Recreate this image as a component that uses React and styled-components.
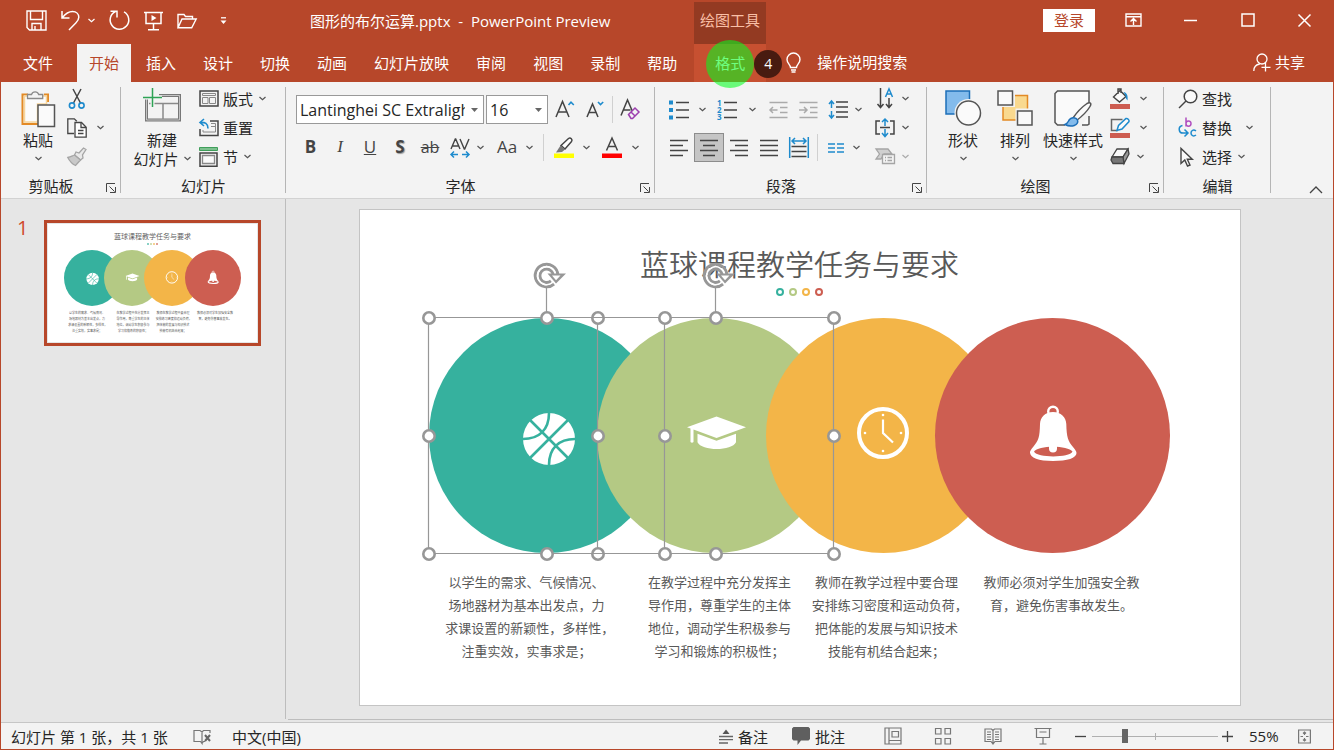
import React from 'react';
import styled, { createGlobalStyle } from 'styled-components';

const GlobalStyle = createGlobalStyle`
	* {
		box-sizing: border-box;
	}
	body {
		margin: 0;
		background: #e6e6e6;
		color: #262626;
		font-family: 'Open Sans', 'Noto Sans CJK SC', sans-serif;
		font-size: 15px;
	}
	button,
	select,
	input {
		font: inherit;
		color: inherit;
	}
	button {
		border: 0;
		padding: 0;
		background: none;
		white-space: nowrap;
	}
	svg {
		display: block;
		flex: none;
		overflow: visible;
	}
`;

/* ---------- window ---------- */
const Window = styled.div`
	display: flex;
	flex-direction: column;
	min-height: 100vh;
	border: 1px solid #b7472a;
	border-top: 0;
`;
const TitleBar = styled.header`
	display: flex;
	align-items: center;
	height: 44px;
	background: #b7472a;
	color: #fff;
`;
const QuickAccess = styled.div`
	display: flex;
	align-items: center;
	gap: 14px;
	width: 309px;
	padding: 0 0 3px 25px;
	button {
		display: flex;
		align-items: center;
		gap: 8px;
	}
`;
const DocTitle = styled.h1`
	width: 384px;
	margin: 0;
	padding-bottom: 3px;
	font-size: 15px;
	font-weight: 400;
	white-space: pre;
`;
const ToolContext = styled.div`
	align-self: flex-end;
	width: 72px;
	height: 42px;
	line-height: 36px;
	text-align: center;
	background: #933a22;
	color: #f9bfa6;
`;
const WindowButtons = styled.div`
	display: flex;
	align-items: center;
	margin-left: auto;
	padding-bottom: 4px;
`;
const SignIn = styled.button`
	width: 52px;
	height: 23px;
	margin-right: 10px;
	line-height: 22px;
	background: #fff;
	color: #b7472a;
`;
const WindowButton = styled.button`
	display: flex;
	justify-content: center;
	align-items: center;
	width: 57px;
	height: 40px;
`;

/* ---------- ribbon tabs ---------- */
const Tabs = styled.nav`
	display: flex;
	gap: 3px;
	height: 38px;
	padding: 0 28px 0 10px;
	background: #b7472a;
	color: #fff;
`;
const Tab = styled.button`
	height: 38px;
	padding: 0 12px;
	line-height: 34px;
	background: ${(p) => (p.$active ? '#f3f3f3' : 'transparent')};
	color: ${(p) => (p.$active ? '#b7472a' : '#fff')};
	margin-right: ${(p) => (p.$file ? '9px' : '0')};
`;
const FormatTab = styled(Tab)`
	position: relative;
	width: 72px;
	margin-left: 2px;
	background: #c75031;
	color: #fff;
`;
const ClickSpot = styled.span`
	position: absolute;
	z-index: 2;
	left: 12px;
	top: -4px;
	width: 48px;
	height: 48px;
	border-radius: 50%;
	background: rgba(0, 255, 28, 0.57);
`;
const ClickCount = styled.span`
	position: absolute;
	z-index: 2;
	left: 60px;
	top: 6px;
	width: 28px;
	height: 28px;
	border-radius: 50%;
	background: #481b10;
	color: #fff;
	font-size: 14px;
	line-height: 28px;
`;
const TellMe = styled.button`
	display: flex;
	align-items: center;
	gap: 16px;
	margin-left: 17px;
	height: 38px;
	line-height: 34px;
	padding-bottom: 2px;
`;
const Share = styled(TellMe)`
	gap: 4px;
	margin-left: auto;
`;

/* ---------- ribbon ---------- */
const Ribbon = styled.div`
	display: flex;
	height: 117px;
	background: #f3f3f3;
	border-bottom: 1px solid #d2d2d2;
`;
const Group = styled.section`
	display: flex;
	flex-direction: column;
	position: relative;
	width: ${(p) => p.$w}px;
	padding-top: 2px;
	&::after {
		content: '';
		position: absolute;
		right: 0;
		top: 5px;
		bottom: 5px;
		width: 1px;
		background: #b5b5b5;
	}
`;
const GroupBody = styled.div`
	display: flex;
	height: 92px;
	padding-left: ${(p) => p.$pad}px;
`;
const GroupFoot = styled.div`
	display: flex;
	align-items: center;
	height: 20px;
	h2 {
		flex: 1;
		margin: 0;
		font-size: 15px;
		font-weight: 400;
		line-height: 20px;
		text-align: center;
	}
	button {
		width: 20px;
		padding: 4px 0 0 5px;
	}
`;
const BigButton = styled.button`
	display: flex;
	flex-direction: column;
	align-items: center;
	width: ${(p) => p.$w}px;
	height: 87px;
	padding-top: 4px;
	line-height: 20px;
	svg:first-child {
		margin-bottom: 2px;
	}
`;
const BigLine = styled.span`
	display: flex;
	align-items: center;
	justify-content: center;
	gap: 5px;
	height: 18px;
`;
const Stack = styled.div`
	display: flex;
	flex-direction: column;
	margin-left: ${(p) => p.$ml || 0}px;
`;
const Line = styled.div`
	display: flex;
	align-items: center;
	height: 29px;
`;
const LabelButton = styled.button`
	display: flex;
	align-items: center;
	gap: 4px;
	height: 29px;
	svg + svg {
		margin-left: 2px;
	}
`;
const Tool = styled.button`
	display: flex;
	justify-content: center;
	align-items: center;
	width: ${(p) => p.$w || 30}px;
	height: 29px;
	color: #444;
	border: 1px solid ${(p) => (p.$on ? '#8c8c8c' : 'transparent')};
	background: ${(p) => (p.$on ? '#c5c5c5' : 'transparent')};
	margin-left: ${(p) => p.$ml || 0}px;
`;
const Glyph = styled.span`
	padding-bottom: 2px;
	font-family: ${(p) => (p.$serif ? "'Liberation Serif', serif" : 'inherit')};
	font-size: ${(p) => p.$size || 17}px;
	line-height: 20px;
	color: #444;
	text-shadow: ${(p) => (p.$shadow ? '1px 1px 1px #999' : 'none')};
`;
const Drop = styled.button`
	display: flex;
	justify-content: center;
	align-items: center;
	width: ${(p) => p.$w || 10}px;
	height: 29px;
	margin-left: ${(p) => p.$ml || 0}px;
`;
const Sep = styled.span`
	width: 1px;
	height: 27px;
	margin: 0 ${(p) => p.$gap}px;
	background: #d0d0d0;
`;
const ToolRows = styled.div`
	display: flex;
	flex-direction: column;
	gap: 9px;
	padding-top: 11px;
`;
const Combo = styled.label`
	display: grid;
	align-items: center;
	width: ${(p) => p.$w}px;
	height: 29px;
	margin-right: 2px;
	background: #fff;
	border: 1px solid #999;
	select,
	svg {
		grid-area: 1 / 1;
	}
	select {
		appearance: none;
		width: 100%;
		height: 27px;
		border: 0;
		padding: 0 18px 0 3px;
		background: none;
		font-size: 16px;
	}
	svg {
		justify-self: end;
		margin-right: 5px;
		pointer-events: none;
	}
`;
const Collapse = styled.button`
	align-self: flex-end;
	margin-left: auto;
	padding: 0 10px 4px;
`;

/* ---------- workspace ---------- */
const Workspace = styled.main`
	display: flex;
	flex: 1;
	background: #e6e6e6;
`;
const Outline = styled.aside`
	display: flex;
	align-items: flex-start;
	gap: 15px;
	width: 285px;
	margin-bottom: 3px;
	padding: 21px 0 0 16px;
	border-right: 1px solid #bdbdbd;
`;
const SlideNumber = styled.span`
	font-size: 20px;
	line-height: 16px;
	width: 12px;
	color: #d04a2c;
`;
const Thumb = styled.button`
	padding: 1px;
	border: 3px solid #b7472a;
	background: #e6e6e6;
	text-align: left;
`;
const Stage = styled.div`
	display: flex;
	flex: 1;
	justify-content: center;
	align-items: center;
	margin: 0 0 2px 2px;
	padding: 0 22px 3px 0;
	border-bottom: 1px solid #bdbdbd;
`;

/* ---------- slide canvas ---------- */
const Page = styled.div`
	position: relative;
	width: ${(p) => Math.round(880 * p.$k)}px;
	height: ${(p) => Math.round(495 * p.$k)}px;
	background: #fff;
	outline: ${(p) => (p.$k === 1 ? '1px solid #c4c4c4' : '0')};
`;
const PageTitle = styled.div`
	padding-top: ${(p) => Math.round(35 * p.$k)}px;
	font-size: ${(p) => Math.round(29 * p.$k)}px;
	line-height: ${(p) => Math.round(40 * p.$k)}px;
	font-weight: 350;
	text-align: center;
	color: #595959;
`;
const Dots = styled.div`
	display: flex;
	justify-content: center;
	gap: ${(p) => Math.round(5 * p.$k)}px;
	padding-top: ${(p) => Math.round(3 * p.$k)}px;
`;
const Dot = styled.span`
	width: ${(p) => Math.round(8 * p.$k)}px;
	height: ${(p) => Math.round(8 * p.$k)}px;
	border: ${(p) => Math.ceil(2 * p.$k)}px solid ${(p) => p.$color};
	border-radius: 50%;
`;
const Disc = styled.div`
	position: absolute;
	left: ${(p) => Math.round(p.$x * p.$k)}px;
	top: ${(p) => Math.round(108 * p.$k)}px;
	width: ${(p) => Math.round(235 * p.$k)}px;
	height: ${(p) => Math.round(235 * p.$k)}px;
	border-radius: 50%;
	background: ${(p) => p.$color};
`;
const Art = styled.svg`
	position: absolute;
	left: 0;
	top: 0;
	width: 100%;
	height: 100%;
`;
const Caption = styled.p`
	position: absolute;
	left: ${(p) => Math.round((p.$cx - 85) * p.$k)}px;
	top: ${(p) => Math.round(361 * p.$k)}px;
	width: ${(p) => Math.round(170 * p.$k)}px;
	margin: 0;
	font-size: ${(p) => Math.round(13 * p.$k)}px;
	line-height: ${(p) => Math.round(23.4 * p.$k)}px;
	text-align: center;
	white-space: nowrap;
	color: #595959;
`;
const HalfWidth = styled.span`
	font-feature-settings: 'halt';
`;

/* ---------- status bar ---------- */
const StatusBar = styled.footer`
	display: flex;
	align-items: center;
	height: 27px;
	padding: 0 22px 0 10px;
	background: #f3f3f3;
	border-top: 1px solid #c6c6c6;
	button {
		display: flex;
		align-items: center;
	}
`;
const PageCount = styled.span`
	width: 182px;
	white-space: pre;
`;
const Language = styled.button`
	margin-left: 21px;
`;
const StatusRight = styled.div`
	display: flex;
	align-items: center;
	margin-left: auto;
`;
const StatusButton = styled.button`
	gap: 5px;
	margin-right: 24px;
`;
const Views = styled.div`
	display: flex;
	gap: 32px;
	margin: 0 23px 0 15px;
`;
const ZoomRange = styled.input`
	appearance: none;
	width: 126px;
	height: 16px;
	margin: 0 4px 0 6px;
	background: linear-gradient(#b0b0b0, #b0b0b0) center / 1px 7px no-repeat,
		linear-gradient(#b0b0b0, #b0b0b0) center / 100% 1px no-repeat;
	&::-webkit-slider-thumb {
		appearance: none;
		width: 6px;
		height: 14px;
		background: #666;
	}
`;
const ZoomValue = styled.button`
	width: 49px;
	margin-left: 16px;
`;

/* ---------- icons ---------- */
const Svg = ({ w = 20, h = 20, children, ...rest }) => (
	<svg width={w} height={h} viewBox={`0 0 ${w} ${h}`} fill="none" stroke="#444" strokeWidth="1.3" aria-hidden="true" {...rest}>
		{children}
	</svg>
);
const BLUE = '#1e8bcd';

const Chevron = ({ color = '#555' }) => (
	<Svg w={7} h={5} stroke={color} strokeWidth="1.2">
		<path d="M.5 1l3 2.8L6.5 1" />
	</Svg>
);
const Caret = () => (
	<Svg w={7} h={4}>
		<path d="M0 0h7L3.5 4z" fill="#666" stroke="none" />
	</Svg>
);
const Launcher = () => (
	<Svg w={10} h={10} strokeWidth="1">
		<path d="M.5 9V.5H9M3.5 3.5l5 5M9.5 4v5.5H4" />
	</Svg>
);
const SaveIcon = () => (
	<Svg w={21} h={21} stroke="#fff" strokeWidth="1.4">
		<path d="M1 1h19v19H3.500L1 17.500zM4.500 1v8.500h12V1M6 20v-6.500h9V20M9 20v-4" />
	</Svg>
);
const UndoIcon = () => (
	<Svg w={19} h={21} stroke="#fff" strokeWidth="1.5">
		<path d="M1 1v7h7.500M1.500 7.500C5 3 8 1.500 11.500 1.500c4 0 6.300 2.600 6.300 5.800 0 2.500-1.300 4-3 5.700L8 20" />
	</Svg>
);
const RedoIcon = () => (
	<Svg w={21} h={21} stroke="#fff" strokeWidth="1.5">
		<path d="M15 1.800a9.300 9.300 0 1 1-8.500-.3M1.500 1.200H8V7.500" />
	</Svg>
);
const ShowIcon = () => (
	<Svg w={19} h={20} stroke="#fff" strokeWidth="1.5">
		<path d="M0 1.500h19M2 1.500v11h15v-11M9.500 12.500v6M4 18.800h11" />
		<path d="M7.500 4l5 3-5 3z" fill="#fff" stroke="none" />
	</Svg>
);
const OpenIcon = () => (
	<Svg w={20} h={16} stroke="#fff" strokeWidth="1.4">
		<path d="M1 14.800V1.500h6l1.500 2h7V6M1 14.800L5 6h14.200l-4.500 8.800z" />
	</Svg>
);
const MoreIcon = () => (
	<Svg w={7} h={8} stroke="#fff">
		<path d="M1 .8h5" />
		<path d="M.5 3.500h6l-3 3.500z" fill="#fff" stroke="none" />
	</Svg>
);
const BulbIcon = () => (
	<Svg w={15} h={21} stroke="#fff" strokeWidth="1.4">
		<path d="M4.500 15.500c0-3-3.500-4-3.500-8a6.500 6.500 0 0 1 13 0c0 4-3.500 5-3.500 8zM5 18h5M5.500 20h4" />
	</Svg>
);
const ShareIcon = () => (
	<Svg w={18} h={19} stroke="#fff">
		<circle cx="9" cy="6" r="5" />
		<path d="M.8 18c0-4 2.500-6.500 6-7M12.500 9.500v9M8.500 14.300h9" />
	</Svg>
);
const PasteIcon = () => (
	<Svg w={36} h={40}>
		<path d="M8 6.500H2.500V36H18M24 6.500h4V14" stroke="#e38a25" strokeWidth="2" />
		<path d="M4.500 8h22v8h-9v18h-13z" fill="#fcfcfc" stroke="#f7d59b" strokeWidth="1.500" />
		<path d="M7.500 10.500v-4h4a3.800 3.800 0 0 1 7.200 0h4v4z" fill="#f3f3f3" stroke="#8a8a8a" />
		<path d="M18 17h16.500v21.500H18z" fill="#fafafa" stroke="#555" strokeWidth="1.500" />
	</Svg>
);
const CutIcon = () => (
	<Svg w={20} h={22}>
		<path d="M6 1l7.500 14M14 1L6.500 15" strokeWidth="1.500" />
		<circle cx="5" cy="17.500" r="2.600" stroke={BLUE} strokeWidth="1.600" />
		<circle cx="14.500" cy="17.500" r="2.600" stroke={BLUE} strokeWidth="1.600" />
	</Svg>
);
const CopyIcon = () => (
	<Svg w={20} h={20}>
		<path d="M7 15.500H.8V.8h6.500l2.500 2.500" />
		<path d="M8 4.500h6.500l4.700 4.700v10H8z" fill="#fff" />
		<path d="M14 4.500v5h5M11 12.500h5.500M11 15.500h5.500" />
	</Svg>
);
const BrushIcon = () => (
	<Svg w={20} h={20} stroke="#a5a5a5">
		<path d="M19 2.500L16.500 1 12 6 9 5 7.500 8l6 5 2.500-2-.5-3z" fill="#e9e9e9" />
		<path d="M7.500 8C5 9 3.500 10 .8 10.500c2 4 4.500 6.500 7.700 8l5-5.500z" fill="#c9c9c9" />
	</Svg>
);
const NewSlideIcon = () => (
	<Svg w={38} h={40}>
		<path d="M3.500 9v23h33V7.500H16" stroke="#777" strokeWidth="3" />
		<path d="M3.500 9v23h33V7.500H16" stroke="#d5d5d5" strokeWidth=".8" />
		<path d="M6 15.500h29M20 15.500V31" stroke="#8a8a8a" strokeWidth="1.500" />
		<path d="M0 9.500h19M9.500 0v19" stroke="#f3f3f3" strokeWidth="4" />
		<path d="M0 9.500h19M9.500 0v19" stroke="#2ea355" strokeWidth="1.500" />
	</Svg>
);
const LayoutIcon = () => (
	<Svg w={20} h={17}>
		<path d="M1 1h18v15H1z" strokeWidth="1.500" />
		<path d="M3.500 3.500h13v2h-13zM3.500 7.500h5.500v6H3.500zM10.500 7.500h6v6h-6z" stroke="#888" strokeWidth="1" />
	</Svg>
);
const ResetIcon = () => (
	<Svg w={20} h={19}>
		<path d="M11 3h8v14.500H1V11" strokeWidth="1.500" />
		<path d="M12 5.500h4.500V14H4v-2M12 8.500h4.500" stroke="#888" strokeWidth="1" />
		<path d="M5 1L1 4.500 5 8M1 4.500c5-.5 8 1 8 6" stroke={BLUE} strokeWidth="1.600" />
	</Svg>
);
const SectionIcon = () => (
	<Svg w={20} h={20}>
		<path d="M.5.5h18v3H.5z" fill="#7cc08e" stroke="#3f9e5a" strokeWidth="1" />
		<path d="M1 6h17v13.200H1z" strokeWidth="1.500" />
		<path d="M3.500 8.500h12v8h-12z" stroke="#888" fill="#fafafa" />
	</Svg>
);
const GrowIcon = () => (
	<Svg w={20} h={20}>
		<path d="M1 17L7.500 1.500 14 17M3 12h9" strokeWidth="1.500" />
		<path d="M13.500 5l2.500-2.800L18.800 5" stroke={BLUE} strokeWidth="1.600" />
	</Svg>
);
const ShrinkIcon = () => (
	<Svg w={18} h={20}>
		<path d="M1 17L6.500 4 12 17M3 12.500h7" strokeWidth="1.500" />
		<path d="M12 2l2.500 2.600L17.200 2" stroke={BLUE} strokeWidth="1.600" />
	</Svg>
);
const ClearIcon = () => (
	<Svg w={20} h={21}>
		<path d="M1 16.500L7.500 1l5 11.500M3.500 11h7" strokeWidth="1.500" />
		<path d="M8.500 15.500l6.500-6.500 4 4-6.500 6.500h-1.500zM11 13l3.800 3.800" stroke="#9c3fae" fill="#f3f3f3" strokeWidth="1.500" />
	</Svg>
);
const SpacingIcon = () => (
	<Svg w={20} h={20}>
		<path d="M1 11L5.300 1h.4L10 11M2.500 8h6M10 1l4.300 10h.4L19 1" strokeWidth="1.400" />
		<path d="M1 16.500h7M4 13.500l-3 3 3 3M12 16.500h7M16 13.500l3 3-3 3" stroke={BLUE} strokeWidth="1.500" />
	</Svg>
);
const HighlightIcon = () => (
	<Svg w={20} h={22}>
		<path d="M7 8.500L14.500 1.500c2-1.500 4.500 1 3 3L11 12z" fill="#fff" strokeWidth="1.500" />
		<path d="M6.500 8.500l4.500 4-3 2.500-6 .5z" fill="#777" stroke="none" />
		<path d="M0 16.500h20v4.500H0z" fill="#ff0" stroke="none" />
	</Svg>
);
const FontColorIcon = () => (
	<Svg w={20} h={22}>
		<path d="M4.500 13.500L10 1l5.500 12.500M6.500 9.500h7" strokeWidth="1.500" />
		<path d="M0 16.500h20v4.500H0z" fill="#f00" stroke="none" />
	</Svg>
);
const BulletsIcon = () => (
	<Svg w={20} h={20} strokeWidth="1.5">
		<path d="M7 2.500h13M7 10h13M7 17.500h13" />
		<path d="M0 .5h4v4H0zM0 8h4v4H0zM0 15.500h4v4H0z" fill={BLUE} stroke="none" />
	</Svg>
);
const NumbersIcon = () => (
	<Svg w={20} h={20} strokeWidth="1.5">
		<path d="M7 2.500h13M7 10h13M7 17.500h13" />
		<g fill={BLUE} stroke="none" fontSize="8" fontWeight="700" fontFamily="Open Sans, sans-serif">
			<text x="0" y="6">1</text>
			<text x="0" y="13">2</text>
			<text x="0" y="20">3</text>
		</g>
	</Svg>
);
const IndentIcon = ({ more }) => (
	<Svg w={19} h={18} stroke="#aaa" strokeWidth="1.5">
		<path d="M.5 1.500h18M11 6.500h7.500M11 11.500h7.500M.5 16.500h18" />
		<path d={more ? 'M0 9h7.500M5 6l3 3-3 3' : 'M8.500 9H1M4 6L1 9l3 3'} />
	</Svg>
);
const LineHeightIcon = () => (
	<Svg w={20} h={19} strokeWidth="1.5">
		<path d="M8 2h12M8 7h12M8 12h12M8 17h12" />
		<path d="M3.500 2v6M1 4l2.500-3L6 4M3.500 11v6M1 15l2.500 3L6 15" stroke={BLUE} />
	</Svg>
);
const ALIGN = {
	left: 'M0 1.500h18M0 6.500h13M0 11.500h18M0 16.500h13',
	center: 'M0 1.500h18M3 6.500h12M0 11.500h18M3 16.500h12',
	right: 'M0 1.500h18M5 6.500h13M0 11.500h18M5 16.500h13',
	justify: 'M0 1.500h18M0 6.500h18M0 11.500h18M0 16.500h18',
};
const AlignIcon = ({ kind }) => (
	<Svg w={18} h={18} strokeWidth="1.5">
		<path d={ALIGN[kind]} />
	</Svg>
);
const DistributeIcon = () => (
	<Svg w={20} h={21} strokeWidth="1.5">
		<path d="M2.500 9.500h15M2.500 14.500h15M2.500 19.500h15" />
		<path d="M.7 0v21M19.300 0v21M3 4h14M6 1L3 4l3 3M14 1l3 3-3 3" stroke={BLUE} />
	</Svg>
);
const ColumnsIcon = () => (
	<Svg w={16} h={10} stroke={BLUE} strokeWidth="1.5">
		<path d="M0 1h7M0 5h7M0 9h7M9 1h7M9 5h7M9 9h7" />
	</Svg>
);
const DirectionIcon = () => (
	<Svg w={18} h={21} strokeWidth="1.5">
		<path d="M4.500 0v19M1.500 16l3 3.500 3-3.500M13 10v9M10 16l3 3.500 3-3.500" />
		<path d="M9.500 9L13 .8 16.500 9M10.800 6h4.500" stroke={BLUE} />
	</Svg>
);
const AlignTextIcon = () => (
	<Svg w={20} h={20} strokeWidth="1.5">
		<path d="M5 3H1v13h4M15 3h4v13h-4M5 9.500h10" />
		<path d="M10 1v7M7 4l3-3 3 3M10 11v7M7 15l3 3.500 3-3.500" stroke={BLUE} />
	</Svg>
);
const SmartArtIcon = () => (
	<Svg w={20} h={17} stroke="#a5a5a5">
		<path d="M1 1h12l4 5H9l-3 5H1l3.500-5z" fill="#d0d0d0" />
		<path d="M7.500 6.500h12v9h-12z" fill="#f3f3f3" />
		<path d="M10 9.500h1M12.500 9.500H17M10 12.500h1M12.500 12.500H17" />
	</Svg>
);
const ShapesIcon = () => (
	<Svg w={36} h={40}>
		<path d="M1 3h23.500v23H1z" fill="#83bbec" stroke="#1d6fb8" strokeWidth="1.500" />
		<circle cx="23.500" cy="25" r="14" fill="#f3f3f3" stroke="none" />
		<circle cx="23.500" cy="25" r="12" fill="#fafafa" stroke="#555" strokeWidth="1.500" />
	</Svg>
);
const ArrangeIcon = () => (
	<Svg w={36} h={40} strokeWidth="1.5">
		<path d="M6 7.500h24.500v24.500H6z" fill="#f9d98f" stroke="#e38a25" />
		<path d="M0 1h18v18H0zM18.500 20.500H36V40H18.500z" fill="#f3f3f3" stroke="none" />
		<path d="M1 3h14.500v14H1zM20.500 23h14.500v14H20.500z" fill="#fafafa" stroke="#555" />
	</Svg>
);
const StyleIcon = () => (
	<Svg w={38} h={40} strokeWidth="1.5">
		<path d="M11 37H3.500L1 34.500V5.500L3.500 3H35v13M35 28v8l-1.500 1H28" fill="#fafafa" stroke="#555" />
		<path d="M19 30c4-6 9-11 14-14.500 3-1.500 5-.5 3 3-3 5-7.500 9.500-13.500 14z" fill="#fafafa" stroke="#555" />
		<path d="M11 36.500c3-1 3-3 4.500-5 2-2.500 6.500-2.500 8 .5 1.500 5-6 8-12.500 4.500z" fill="#83bbec" stroke="#1d6fb8" />
	</Svg>
);
const FillIcon = () => (
	<Svg w={20} h={21}>
		<path d="M3.500 9L10 2.500l6 6-6.500 5.500zM8 6V1h3v4" fill="#fafafa" strokeWidth="1.400" />
		<path d="M13.500 4c3 .5 4.800 3 4 8.500-1.500-1.500-2-3-2-5z" fill={BLUE} stroke="none" />
		<path d="M0 16h20v5H0z" fill="#cd5c50" stroke="none" />
	</Svg>
);
const OutlineIcon = () => (
	<Svg w={20} h={21}>
		<path d="M8 13.500H1.500v-11h11" strokeWidth="1.500" stroke="#666" />
		<path d="M7 13.500l1.500-5L16 1.500c1.500-.5 3.500 1.500 3 3L12 12z" fill="#fafafa" stroke={BLUE} strokeWidth="1.500" />
		<path d="M0 16h20v5H0z" fill="#cd5c50" stroke="none" />
	</Svg>
);
const EffectIcon = () => (
	<Svg w={20} h={17}>
		<path d="M7 1h11L13 9H2z" fill="#fafafa" />
		<path d="M18 1l1 5-5 9.500L13 9z" fill="#999" />
		<path d="M2 9h11l1 6.500H3L1 12z" fill="#777" />
	</Svg>
);
const FindIcon = () => (
	<Svg w={20} h={20} strokeWidth="1.5">
		<circle cx="12.500" cy="7.500" r="6.300" fill="#fafafa" />
		<path d="M8 12L1 19" />
	</Svg>
);
const ReplaceIcon = () => (
	<Svg w={20} h={21}>
		<path d="M8 .5v9M8 6.500c0-3 5-3.500 5 0s-5 3.500-5 0" stroke="#b04fc0" strokeWidth="1.500" />
		<path d="M18 14c-2.500-2-5-.5-5 2s2.500 4 5 2" stroke={BLUE} strokeWidth="1.500" />
		<path d="M4.500 8.500c-5 1-4 8 1 7.500h4M6.500 12.500l3.500 3.500-3.500 3.500" stroke={BLUE} strokeWidth="1.500" />
	</Svg>
);
const SelectIcon = () => (
	<Svg w={20} h={20}>
		<path d="M3 1.500v15l3.800-3.500 2.700 6 2.500-1-2.700-5.800h5z" fill="#fafafa" strokeWidth="1.400" />
	</Svg>
);
const RibbonOptionsIcon = () => (
	<Svg w={17} h={14} stroke="#fff" strokeWidth="1.4">
		<path d="M1 1h15v12H1zM1 3.800h15M8.500 12V6M5.500 8.500l3-3 3 3" />
	</Svg>
);
const SpellIcon = () => (
	<Svg w={18} h={15} stroke="#777">
		<path d="M9 3v11.500L7.500 12.500H1V1.500h6L9 3l1.500-1.500H17V4M9 14.500l1.500-2H12" strokeWidth="1.200" />
		<path d="M12 6l5 6M17 6l-5 6" stroke="#666" strokeWidth="2" />
	</Svg>
);
const NotesIcon = () => (
	<Svg w={14} h={15}>
		<path d="M3.500 5L7 .5 10.500 5z" fill="#555" stroke="none" />
		<path d="M0 7.500h14M0 10.700h14M0 14h9" stroke="#666" />
	</Svg>
);
const CommentIcon = () => (
	<Svg w={18} h={18}>
		<path d="M1.500 0h15L18 1.500V12l-1.500 1.500H9L5.500 18v-4.500h-4L0 12V1.500z" fill="#5f5f5f" stroke="none" />
	</Svg>
);
const NormalIcon = () => (
	<Svg w={18} h={18} stroke="#777" strokeWidth="1.2">
		<path d="M1 1h16v16H1zM5 1v16M5 13.500h12M8 4.500h6.500v5.500H8z" />
	</Svg>
);
const SorterIcon = () => (
	<Svg w={18} h={18} stroke="#777" strokeWidth="1.2">
		<path d="M1.500 1.500H7V7H1.500zM11 1.500h5.500V7H11zM1.500 11.500H7V17H1.500zM11 11.500h5.500V17H11z" />
	</Svg>
);
const ReadingIcon = () => (
	<Svg w={18} h={18} stroke="#777" strokeWidth="1.2">
		<path d="M9 3.500L7.500 2H1v12.500h6L9 17l2-2.500h6V2h-6.500zV16M3 5h4M3 7.500h4M3 10h4M3 12.500h4M11 5h4M11 7.500h4M11 10h4M11 12.500h4" />
	</Svg>
);
const ShowViewIcon = () => (
	<Svg w={18} h={18} stroke="#777" strokeWidth="1.2">
		<path d="M.5 1.500h17M2.500 1.500v9h13v-9M5.500 5h7M9 10.500V17M5.500 17h7" />
	</Svg>
);
const FitIcon = () => (
	<Svg w={13} h={15} stroke="#777" strokeWidth="1.2">
		<path d="M.6 1h11.800v13H.6zM6.500 3v3M5 4.500L6.500 3 8 4.500M6.500 12V9M5 10.500L6.500 12 8 10.500M2.500 7.500H5M10.500 7.500H8" />
	</Svg>
);

/* ---------- slide artwork, drawn in the disc's own 235 box ---------- */
const Ball = () => (
	<Art viewBox="0 0 235 235">
		<circle cx="120" cy="121" r="26" fill="#fff" />
		<g fill="none" stroke="#36b19e" strokeWidth="2.600">
			<path d="M101 102l38 38M139 102l-38 38M94 121c16 0 26-9 26-26M146 121c-16 0-26 9-26 26" />
		</g>
	</Art>
);
const Cap = () => (
	<Art viewBox="0 0 235 235">
		<path d="M119.500 98.500l29.500 10.800-29.500 10.700-23-8.500v12.500q-1.500 1.500-3 0v-13.500l-3.500-1.200z" fill="#fff" />
		<path d="M100.500 115.800l19 7 19.500-7v8.500c-4 9-34.500 9-38.500 0z" fill="#fff" />
	</Art>
);
const Clock = () => (
	<Art viewBox="0 0 235 235">
		<circle cx="117" cy="115" r="24" fill="none" stroke="#fff" strokeWidth="4" />
		<path d="M117 101.500V115l10 9.500" fill="none" stroke="#fff" strokeWidth="2.200" />
		<g fill="#fff">
			<circle cx="117" cy="97" r="1.300" />
			<circle cx="117" cy="133" r="1.300" />
			<circle cx="99" cy="115" r="1.300" />
			<circle cx="135" cy="115" r="1.300" />
		</g>
	</Art>
);
const Bell = () => (
	<Art viewBox="0 0 235 235">
		<circle cx="118" cy="93.500" r="4.800" fill="none" stroke="#fff" strokeWidth="2.400" />
		<path d="M118 94c8 0 13 5 13.300 12 .3 13 1.700 17 6.700 23 3 3.500 3.500 5 3.500 6 0 5-9 8-23.500 8S95 139.500 95 134.500c0-1 .5-2.500 3.500-6 5-6 6.200-9 6.500-22.500.3-7 5-12 13-12z" fill="#fff" />
		<path d="M99 133.500c4-6.500 34-6.500 38.500 0-3 6.500-35.500 6.500-38.500 0z" fill="#cd5e51" />
		<path d="M114 127h8v3.500a4 4 0 0 1-8 0z" fill="#fff" />
	</Art>
);

const SHAPES = [
	{
		x: 69, color: '#36b19e', art: Ball, cx: 167,
		lines: ['以学生的需求、气候情况、', '场地器材为基本出发点，力', '求课设置的新颖性，多样性，', '注重实效，实事求是；'],
	},
	{
		x: 237, color: '#b4c984', art: Cap, cx: 360,
		lines: ['在教学过程中充分发挥主', '导作用，尊重学生的主体', '地位，调动学生积极参与', '学习和锻炼的积极性；'],
	},
	{
		x: 406, color: '#f3b548', art: Clock, cx: 527,
		lines: ['教师在教学过程中要合理', '安排练习密度和运动负荷，', '把体能的发展与知识技术', '技能有机结合起来；'],
	},
	{
		x: 575, color: '#cd5e51', art: Bell, cx: 702,
		lines: ['教师必须对学生加强安全教', '育，避免伤害事故发生。'],
	},
];

// a full line keeps its closing comma at half width
const CaptionLine = ({ text }) =>
	text.length > 11 && text.endsWith('，') ? (
		<>
			{text.slice(0, -1)}
			<HalfWidth>，</HalfWidth>
			<br />
		</>
	) : (
		<>
			{text}
			<br />
		</>
	);

const Frame = ({ x }) => {
	const y = 107.5;
	const s = 236;
	const points = [0, s / 2, s].flatMap((dx) => [0, s / 2, s].map((dy) => [dx, dy])).filter(([dx, dy]) => dx !== s / 2 || dy !== s / 2);
	const cx = x + s / 2;
	return (
		<g fill="none" stroke="#979797">
			<path d={`M${x} ${y}h${s}v${s}h-${s}zM${cx} ${y}V78`} strokeWidth="1.200" />
			<g transform={`translate(${cx} 65.500)`}>
				<path d="M7.500 8.500A11.300 11.300 0 1 1 11.300-1" strokeWidth="3" />
				<path d="M4.500 5.500A6.800 6.800 0 1 1 6.800-1" strokeWidth="3" />
				<path d="M6 7A9 9 0 1 1 9-1" stroke="#fff" strokeWidth="1.600" />
				<path d="M1-2h18.500L9.500 8z" fill="#979797" stroke="none" />
				<path d="M5.500 0H14L9.500 4.700z" fill="#fff" stroke="none" />
			</g>
			{points.map(([dx, dy]) => (
				<circle key={`${dx}-${dy}`} cx={x + dx + 0.5} cy={y + dy + 0.5} r="5.700" fill="#fff" strokeWidth="2.600" />
			))}
		</g>
	);
};

const Slide = ({ k = 1, selected }) => (
	<Page $k={k}>
		<PageTitle $k={k}>蓝球课程教学任务与要求</PageTitle>
		<Dots $k={k}>
			{SHAPES.map((s) => (
				<Dot key={s.x} $k={k} $color={s.color} />
			))}
		</Dots>
		{SHAPES.map(({ x, color, art: Drawing }) => (
			<Disc key={x} $k={k} $x={x} $color={color}>
				<Drawing />
			</Disc>
		))}
		{SHAPES.map((s) => (
			<Caption key={s.x} $k={k} $cx={s.cx}>
				{s.lines.map((text) => (
					<CaptionLine key={text} text={text} />
				))}
			</Caption>
		))}
		{selected && (
			<Art viewBox="0 0 880 495">
				<Frame x={237.5} />
				<Frame x={68.5} />
			</Art>
		)}
	</Page>
);

const TABS = ['插入', '设计', '切换', '动画', '幻灯片放映', '审阅', '视图', '录制', '帮助'];

const Foot = ({ children, launcher }) => (
	<GroupFoot>
		<h2>{children}</h2>
		{launcher && (
			<button aria-label={`${children}选项`}>
				<Launcher />
			</button>
		)}
	</GroupFoot>
);
const More = ({ color, ...rest }) => (
	<Drop aria-label="更多" {...rest}>
		<Chevron color={color} />
	</Drop>
);

function Header() {
	return (
		<>
			<TitleBar>
				<QuickAccess>
					<button aria-label="保存"><SaveIcon /></button>
					<button aria-label="撤消"><UndoIcon /><Chevron color="#fff" /></button>
					<button aria-label="重复"><RedoIcon /></button>
					<button aria-label="从头开始"><ShowIcon /></button>
					<button aria-label="打开"><OpenIcon /></button>
					<button aria-label="自定义快速访问工具栏"><Svg w={1} h={8} stroke="none" /><MoreIcon /></button>
				</QuickAccess>
				<DocTitle>图形的布尔运算.pptx  -  PowerPoint Preview</DocTitle>
				<ToolContext>绘图工具</ToolContext>
				<WindowButtons>
					<SignIn>登录</SignIn>
					<WindowButton aria-label="功能区显示选项"><RibbonOptionsIcon /></WindowButton>
					<WindowButton aria-label="最小化">
						<Svg w={14} h={14} stroke="#fff" strokeWidth="1.5"><path d="M0 7.500h13" /></Svg>
					</WindowButton>
					<WindowButton aria-label="最大化">
						<Svg w={14} h={14} stroke="#fff" strokeWidth="1.5"><path d="M1 1h12v12H1z" /></Svg>
					</WindowButton>
					<WindowButton aria-label="关闭">
						<Svg w={13} h={13} stroke="#fff" strokeWidth="1.5"><path d="M.5.5l12 12M12.500.5l-12 12" /></Svg>
					</WindowButton>
				</WindowButtons>
			</TitleBar>
			<Tabs>
				<Tab $file>文件</Tab>
				<Tab $active>开始</Tab>
				{TABS.map((t) => (
					<Tab key={t}>{t}</Tab>
				))}
				<FormatTab>
					格式
					<ClickSpot />
					<ClickCount>4</ClickCount>
				</FormatTab>
				<TellMe><BulbIcon />操作说明搜索</TellMe>
				<Share><ShareIcon />共享</Share>
			</Tabs>
		</>
	);
}

function HomeRibbon() {
	return (
		<Ribbon>
			<Group $w={120}>
				<GroupBody $pad={13}>
					<BigButton $w={48}>
						<PasteIcon />
						粘贴
						<BigLine><Chevron /></BigLine>
					</BigButton>
					<Stack $ml={5}>
						<Line><Tool $w={20} aria-label="剪切"><CutIcon /></Tool></Line>
						<Line>
							<Tool $w={20} aria-label="复制"><CopyIcon /></Tool>
							<More $w={26} />
						</Line>
						<Line><Tool $w={20} aria-label="格式刷"><BrushIcon /></Tool></Line>
					</Stack>
				</GroupBody>
				<Foot launcher>剪贴板</Foot>
			</Group>
			<Group $w={165}>
				<GroupBody $pad={10}>
					<BigButton $w={62}>
						<NewSlideIcon />
						新建
						<BigLine>幻灯片 <Chevron /></BigLine>
					</BigButton>
					<Stack $ml={6}>
						<LabelButton><LayoutIcon />版式 <Chevron /></LabelButton>
						<LabelButton><ResetIcon />重置</LabelButton>
						<LabelButton><SectionIcon />节 <Chevron /></LabelButton>
					</Stack>
				</GroupBody>
				<Foot>幻灯片</Foot>
			</Group>
			<Group $w={369}>
				<GroupBody $pad={10}>
					<ToolRows>
						<Line>
							<Combo $w={188}>
								<select aria-label="字体"><option>Lantinghei SC Extralight</option></select>
								<Caret />
							</Combo>
							<Combo $w={62}>
								<select aria-label="字号"><option>16</option></select>
								<Caret />
							</Combo>
							<Tool aria-label="增大字号"><GrowIcon /></Tool>
							<Tool aria-label="减小字号"><ShrinkIcon /></Tool>
							<Sep $gap={2} />
							<Tool aria-label="清除格式"><ClearIcon /></Tool>
						</Line>
						<Line>
							<Tool $w={29}><Glyph as="b">B</Glyph></Tool>
							<Tool><Glyph as="i" $serif>I</Glyph></Tool>
							<Tool><Glyph as="u">U</Glyph></Tool>
							<Tool><Glyph as="b" $shadow>S</Glyph></Tool>
							<Tool><Glyph as="s" $size={16}>ab</Glyph></Tool>
							<Tool aria-label="字符间距"><SpacingIcon /></Tool>
							<More />
							<Tool $w={34} $ml={5}><Glyph>Aa</Glyph></Tool>
							<More />
							<Sep $gap={9} />
							<Tool $w={22} aria-label="突出显示颜色"><HighlightIcon /></Tool>
							<More $w={22} />
							<Tool aria-label="字体颜色"><FontColorIcon /></Tool>
							<More $w={16} />
						</Line>
					</ToolRows>
				</GroupBody>
				<Foot launcher>字体</Foot>
			</Group>
			<Group $w={272}>
				<GroupBody $pad={9}>
					<ToolRows>
						<Line>
							<Tool aria-label="项目符号"><BulletsIcon /></Tool>
							<More $w={16} />
							<Tool $w={34} aria-label="编号"><NumbersIcon /></Tool>
							<More $w={16} />
							<Tool $ml={3} aria-label="降低列表级别"><IndentIcon /></Tool>
							<Tool aria-label="提高列表级别"><IndentIcon more /></Tool>
							<Tool aria-label="行距"><LineHeightIcon /></Tool>
							<More />
						</Line>
						<Line>
							<Tool aria-label="左对齐"><AlignIcon kind="left" /></Tool>
							<Tool $on aria-label="居中"><AlignIcon kind="center" /></Tool>
							<Tool aria-label="右对齐"><AlignIcon kind="right" /></Tool>
							<Tool aria-label="两端对齐"><AlignIcon kind="justify" /></Tool>
							<Tool aria-label="分散对齐"><DistributeIcon /></Tool>
							<Sep $gap={3} />
							<Tool aria-label="分栏"><ColumnsIcon /></Tool>
							<More />
						</Line>
					</ToolRows>
					<Stack $ml={7}>
						<Line><Tool aria-label="文字方向"><DirectionIcon /></Tool><More /></Line>
						<Line><Tool aria-label="对齐文本"><AlignTextIcon /></Tool><More /></Line>
						<Line><Tool aria-label="转换为 SmartArt"><SmartArtIcon /></Tool><More color="#aaa" /></Line>
					</Stack>
				</GroupBody>
				<Foot launcher>段落</Foot>
			</Group>
			<Group $w={237}>
				<GroupBody $pad={10}>
					<BigButton $w={52}><ShapesIcon />形状<BigLine><Chevron /></BigLine></BigButton>
					<BigButton $w={52}><ArrangeIcon />排列<BigLine><Chevron /></BigLine></BigButton>
					<BigButton $w={64}><StyleIcon />快速样式<BigLine><Chevron /></BigLine></BigButton>
					<Stack>
						<Line><Tool aria-label="形状填充"><FillIcon /></Tool><More $w={16} /></Line>
						<Line><Tool aria-label="形状轮廓"><OutlineIcon /></Tool><More $w={16} /></Line>
						<Line><Tool aria-label="形状效果"><EffectIcon /></Tool><More $w={10} /></Line>
					</Stack>
				</GroupBody>
				<Foot launcher>绘图</Foot>
			</Group>
			<Group $w={107}>
				<GroupBody $pad={14}>
					<Stack>
						<LabelButton><FindIcon />查找</LabelButton>
						<Line>
							<LabelButton><ReplaceIcon />替换</LabelButton>
							<More $ml={12} />
						</Line>
						<LabelButton><SelectIcon />选择 <Chevron /></LabelButton>
					</Stack>
				</GroupBody>
				<Foot>编辑</Foot>
			</Group>
			<Collapse aria-label="折叠功能区">
				<Svg w={14} h={8}><path d="M1 7l6-6 6 6" /></Svg>
			</Collapse>
		</Ribbon>
	);
}

function Status() {
	return (
		<StatusBar>
			<PageCount>幻灯片 第 1 张，共 1 张</PageCount>
			<button aria-label="拼写检查"><SpellIcon /></button>
			<Language>中文(中国)</Language>
			<StatusRight>
				<StatusButton><NotesIcon />备注</StatusButton>
				<StatusButton><CommentIcon />批注</StatusButton>
				<Views>
					<button aria-label="普通"><NormalIcon /></button>
					<button aria-label="幻灯片浏览"><SorterIcon /></button>
					<button aria-label="阅读视图"><ReadingIcon /></button>
					<button aria-label="幻灯片放映"><ShowViewIcon /></button>
				</Views>
				<button aria-label="缩小"><Svg w={11} h={11}><path d="M0 5.500h11" /></Svg></button>
				<ZoomRange type="range" aria-label="显示比例" min="0" max="100" defaultValue="25" />
				<button aria-label="放大"><Svg w={11} h={11}><path d="M0 5.500h11M5.500 0v11" /></Svg></button>
				<ZoomValue>55%</ZoomValue>
				<button aria-label="适应窗口"><FitIcon /></button>
			</StatusRight>
		</StatusBar>
	);
}

export default function App() {
	return (
		<>
			<GlobalStyle />
			<Window lang="zh-CN">
				<Header />
				<HomeRibbon />
				<Workspace>
					<Outline>
						<SlideNumber>1</SlideNumber>
						<Thumb aria-label="幻灯片 1"><Slide k={0.2375} /></Thumb>
					</Outline>
					<Stage>
						<Slide selected />
					</Stage>
				</Workspace>
				<Status />
			</Window>
		</>
	);
}
